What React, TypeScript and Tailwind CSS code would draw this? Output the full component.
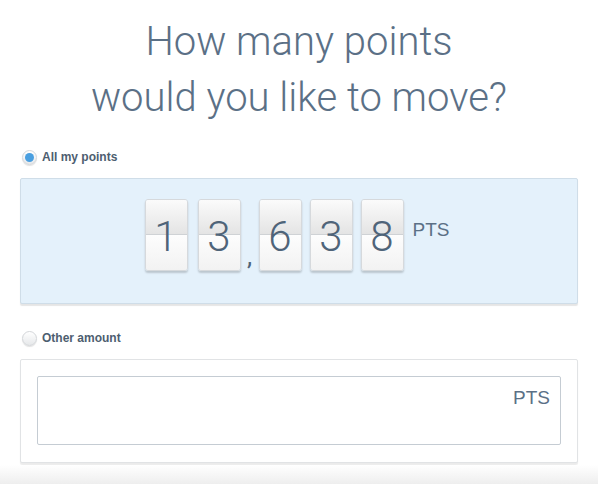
import React, { useState } from "react";

const digits = ["1", "3", ",", "6", "3", "8"];
const gaps = ["mr-[10px]", "", "", "mr-[8px]", "mr-[8px]", ""];

const FlipCard: React.FC<{ value: string }> = ({ value }) => (
    <div className="relative w-[43px] h-[72px] rounded-[3px] border border-[#d6d9dc] shadow-[0_2px_2px_rgba(0,0,0,0.18)] overflow-hidden">
        <div className="h-1/2 bg-gradient-to-b from-[#fbfbfb] to-[#e4e4e4] border-b border-[#cfd2d5]" />
        <div className="h-1/2 bg-gradient-to-b from-[#fdfdfd] to-[#f2f2f2]" />
        <span className="absolute inset-0 flex items-center justify-center pt-[3px] text-[42px] font-light text-[#4f6479] leading-none">
            {value}
        </span>
    </div>
);

const Radio: React.FC<{ checked: boolean; onClick: () => void }> = ({ checked, onClick }) => (
    <button
        onClick={onClick}
        className="w-[15px] h-[15px] rounded-full border border-[#d3d6d9] bg-gradient-to-b from-[#ffffff] to-[#e6e8ea] shadow-[0_1px_1px_rgba(0,0,0,0.12)] flex items-center justify-center"
    >
        {checked && <span className="w-[9px] h-[9px] rounded-full bg-[#4a9fe0]" />}
    </button>
);

const App: React.FC = () => {
    const [mode, setMode] = useState<"all" | "other">("all");
    const [amount, setAmount] = useState<string>("");

    return (
        <div className="w-[598px] h-[484px] bg-white flex flex-col font-['Roboto','Liberation_Sans',sans-serif] overflow-hidden">
            <h1 className="pt-[14px] text-center text-[40px] leading-[56px] font-light text-[#5b7086]">
                How many points
                <br />
                would you like to move?
            </h1>

            <div className="px-[20px] mt-[22px]">
                {/* All my points */}
                <div className="flex items-center gap-[5px] pl-[2px]">
                    <Radio checked={mode === "all"} onClick={() => setMode("all")} />
                    <span className="text-[12px] font-bold text-[#4d5e70] font-['Liberation_Sans',sans-serif]">All my points</span>
                </div>

                <div className="mt-[12px] h-[126px] rounded-[2px] border border-[#cfdde8] bg-[#e4f1fb] shadow-[0_2px_1px_rgba(0,0,0,0.1)] flex justify-center pt-[20px] pr-[4px]">
                    <div className="flex items-start">
                        <div className="flex items-start">
                            {digits.map((d, idx) =>
                                d === "," ? (
                                    <span key={idx} className="w-[18px] h-[72px] flex items-end justify-center text-[26px] text-[#4f6479] leading-none pb-[2px]">
                                        ,
                                    </span>
                                ) : (
                                    <div key={idx} className={gaps[idx]}>
                                        <FlipCard value={d} />
                                    </div>
                                )
                            )}
                        </div>
                        <span className="ml-[9px] mt-[17px] text-[19px] text-[#5b7086] font-['Liberation_Sans',sans-serif]">PTS</span>
                    </div>
                </div>

                {/* Other amount */}
                <div className="mt-[25px] flex items-center gap-[5px] pl-[2px]">
                    <Radio checked={mode === "other"} onClick={() => setMode("other")} />
                    <span className="text-[12px] font-bold text-[#4d5e70] font-['Liberation_Sans',sans-serif]">Other amount</span>
                </div>

                <div className="mt-[12px] h-[104px] rounded-[2px] border border-[#e1e3e5] bg-white shadow-[0_2px_1px_rgba(0,0,0,0.08)] px-[16px] pt-[16px]">
                    <div className="h-[69px] rounded-[2px] border border-[#c5ccd3] flex items-start">
                        <input
                            value={amount}
                            onChange={(e) => setAmount(e.target.value)}
                            onFocus={() => setMode("other")}
                            className="flex-1 h-full bg-transparent outline-none px-3 text-[19px] text-[#5b7086]"
                        />
                        <span className="pr-[10px] pt-[7px] text-[19px] text-[#5b7086] font-['Liberation_Sans',sans-serif]">PTS</span>
                    </div>
                </div>
            </div>

            <div className="flex-1 mt-[2px] bg-gradient-to-b from-[#ffffff] to-[#eeeeee]" />
        </div>
    );
};

export default App;
